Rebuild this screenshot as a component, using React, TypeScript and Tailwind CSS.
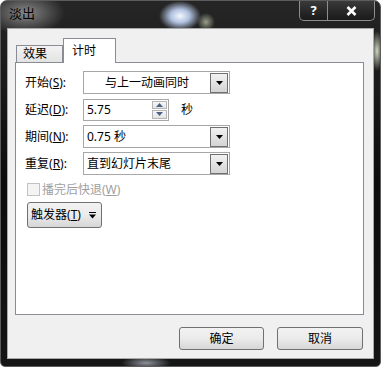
import React from "react";

/**
 * "淡出" animation timing dialog (Windows 7 style).
 */

function Mn({ k }: { k: string }) {
  return <span className="underline underline-offset-[1px]">{k}</span>;
}

function DropArrow() {
  return (
    <svg width="7" height="4" viewBox="0 0 7 4">
      <path d="M0 0H7L3.5 4Z" fill="#000" />
    </svg>
  );
}

function DropButton() {
  return (
    <div className="flex h-[20px] w-[18px] items-center justify-center border border-[#707070] bg-gradient-to-b from-[#f2f2f2] to-[#d4d4d4]">
      <DropArrow />
    </div>
  );
}

function Select({ text, center }: { text: string; center?: boolean }) {
  return (
    <div className="flex h-[23px] w-[147px] items-center border border-[#a7a7a7] bg-white pr-px">
      <div className={center ? "flex-1 text-center" : "flex-1 pl-[3px]"}>{text}</div>
      <DropButton />
    </div>
  );
}

function SpinArrow({ up }: { up?: boolean }) {
  return (
    <svg width="7" height="4" viewBox="0 0 7 4">
      <path d={up ? "M0 4H7L3.5 0Z" : "M0 0H7L3.5 4Z"} fill="#4d6185" />
    </svg>
  );
}

function Row({ label, k, children }: { label: string; k: string; children: React.ReactNode }) {
  return (
    <div className="flex h-[23px] items-center">
      <div className="w-[58px]">
        {label}(<Mn k={k} />):
      </div>
      {children}
    </div>
  );
}

function Button({ children, className }: { children: React.ReactNode; className?: string }) {
  return (
    <div
      className={`flex items-center justify-center rounded-[3px] border border-[#707070] bg-gradient-to-b from-[#f2f2f2] via-[#ebebeb] to-[#d6d6d6] ${className ?? ""}`}
    >
      {children}
    </div>
  );
}

export default function App() {
  return (
    <div className="h-[367px] w-[381px] bg-white font-['Noto_Sans','Noto_Sans_CJK_SC',sans-serif] text-[12px] leading-none text-black">
      <div className="relative flex h-full flex-col overflow-hidden rounded-t-[7px] rounded-b-[5px] border border-[#5c5c5c] bg-gradient-to-b from-[#262626] via-[#0c0c0c] to-[#151515] px-[6px] pb-[7px]">
        {/* glass highlights */}
        <div className="pointer-events-none absolute left-[-16px] top-[-10px] h-[44px] w-[80px] bg-[radial-gradient(closest-side,#8a8a8a,rgba(110,110,110,0.6)_55%,transparent)]" />
        <div className="pointer-events-none absolute left-[158px] top-[0px] h-[30px] w-[42px] bg-[radial-gradient(closest-side,#f4f8ff,rgba(200,220,255,0.85)_45%,transparent)]" />
        <div className="pointer-events-none absolute left-[196px] top-[12px] h-[18px] w-[18px] bg-[radial-gradient(closest-side,rgba(200,210,180,0.7),transparent)]" />
        <div className="pointer-events-none absolute right-[-3px] top-[30px] h-[40px] w-[12px] bg-[radial-gradient(closest-side,rgba(225,235,210,0.9),transparent)]" />
        <div className="pointer-events-none absolute bottom-[-4px] left-[120px] h-[14px] w-[50px] bg-[radial-gradient(closest-side,rgba(170,176,186,0.8),transparent)]" />

        {/* title bar */}
        <div className="relative flex h-[27px] items-start justify-between">
          <div className="pl-[2px] pt-[6px] text-[13px] text-black">淡出</div>
          <div className="-mr-[1px] flex h-[20px] rounded-b-[5px] border border-t-0 border-[#8e8e8e] bg-gradient-to-b from-[#3a3a3a] to-[#1a1a1a]">
            <div className="flex w-[28px] items-center justify-center border-r border-[#8e8e8e] text-[13px] font-bold text-white">
              ?
            </div>
            <div className="flex w-[46px] items-center justify-center">
              <svg width="11" height="10" viewBox="0 0 11 10">
                <path d="M1.5 1L9.5 9M9.5 1L1.5 9" stroke="#fff" strokeWidth="2.6" />
              </svg>
            </div>
          </div>
        </div>

        {/* client area */}
        <div className="relative flex flex-1 flex-col border border-[#a9a9a9] bg-[#f0f0f0] pl-[7px] pr-[9px] pt-[9px]">
          {/* tabs */}
          <div className="flex h-[24px] items-end">
            <div className="ml-px flex h-[17px] w-[47px] items-center border border-b-0 border-[#898c95] bg-gradient-to-b from-[#f3f3f3] to-[#e3e3e3] pl-[6px]">
              效果
            </div>
            <div className="relative z-10 -mb-px flex h-[25px] w-[53px] items-center border border-b-0 border-[#898c95] bg-white pl-[8px]">
              计时
            </div>
          </div>

          {/* tab panel */}
          <div className="flex h-[253px] flex-col gap-[4px] border border-[#898c95] bg-white pl-[9px] pt-[8px]">
            <Row label="开始" k="S">
              <Select text="与上一动画同时" center />
            </Row>
            <Row label="延迟" k="D">
              <div className="flex h-[22px] w-[86px] items-center justify-between border border-[#a7a7a7] bg-white pl-[3px] pr-px">
                <span>5.75</span>
                <div className="flex flex-col gap-px">
                  <div className="flex h-[8px] w-[15px] items-center justify-center border border-[#b5b5b5] bg-gradient-to-b from-[#f7f7f7] to-[#e4e4e4]">
                    <SpinArrow up />
                  </div>
                  <div className="flex h-[9px] w-[15px] items-center justify-center border border-[#b5b5b5] bg-gradient-to-b from-[#f7f7f7] to-[#e4e4e4]">
                    <SpinArrow />
                  </div>
                </div>
              </div>
              <span className="ml-[12px]">秒</span>
            </Row>
            <Row label="期间" k="N">
              <Select text="0.75 秒" />
            </Row>
            <Row label="重复" k="R">
              <Select text="直到幻灯片末尾" />
            </Row>

            <div className="mt-[4px] flex items-center gap-[2px] pl-[2px] text-[#a0a0a0]">
              <div className="h-[13px] w-[13px] border border-[#c2c2c2] bg-[#f4f4f4]" />
              <span>
                播完后快退(<Mn k="W" />)
              </span>
            </div>

            <Button className="mt-[2px] ml-[2px] h-[26px] w-[75px] gap-[8px] pr-[2px]">
              <span>
                触发器(<Mn k="T" />)
              </span>
              <svg width="7" height="7" viewBox="0 0 7 7">
                <path d="M0 0.5H7" stroke="#000" strokeWidth="1" />
                <path d="M0 2.5H7L3.5 6.5Z" fill="#000" />
              </svg>
            </Button>
          </div>

          {/* footer buttons */}
          <div className="mt-[12px] flex justify-end gap-[13px] pr-[1px]">
            <Button className="h-[23px] w-[85px]">确定</Button>
            <Button className="h-[23px] w-[86px]">取消</Button>
          </div>
        </div>
      </div>
    </div>
  );
}
